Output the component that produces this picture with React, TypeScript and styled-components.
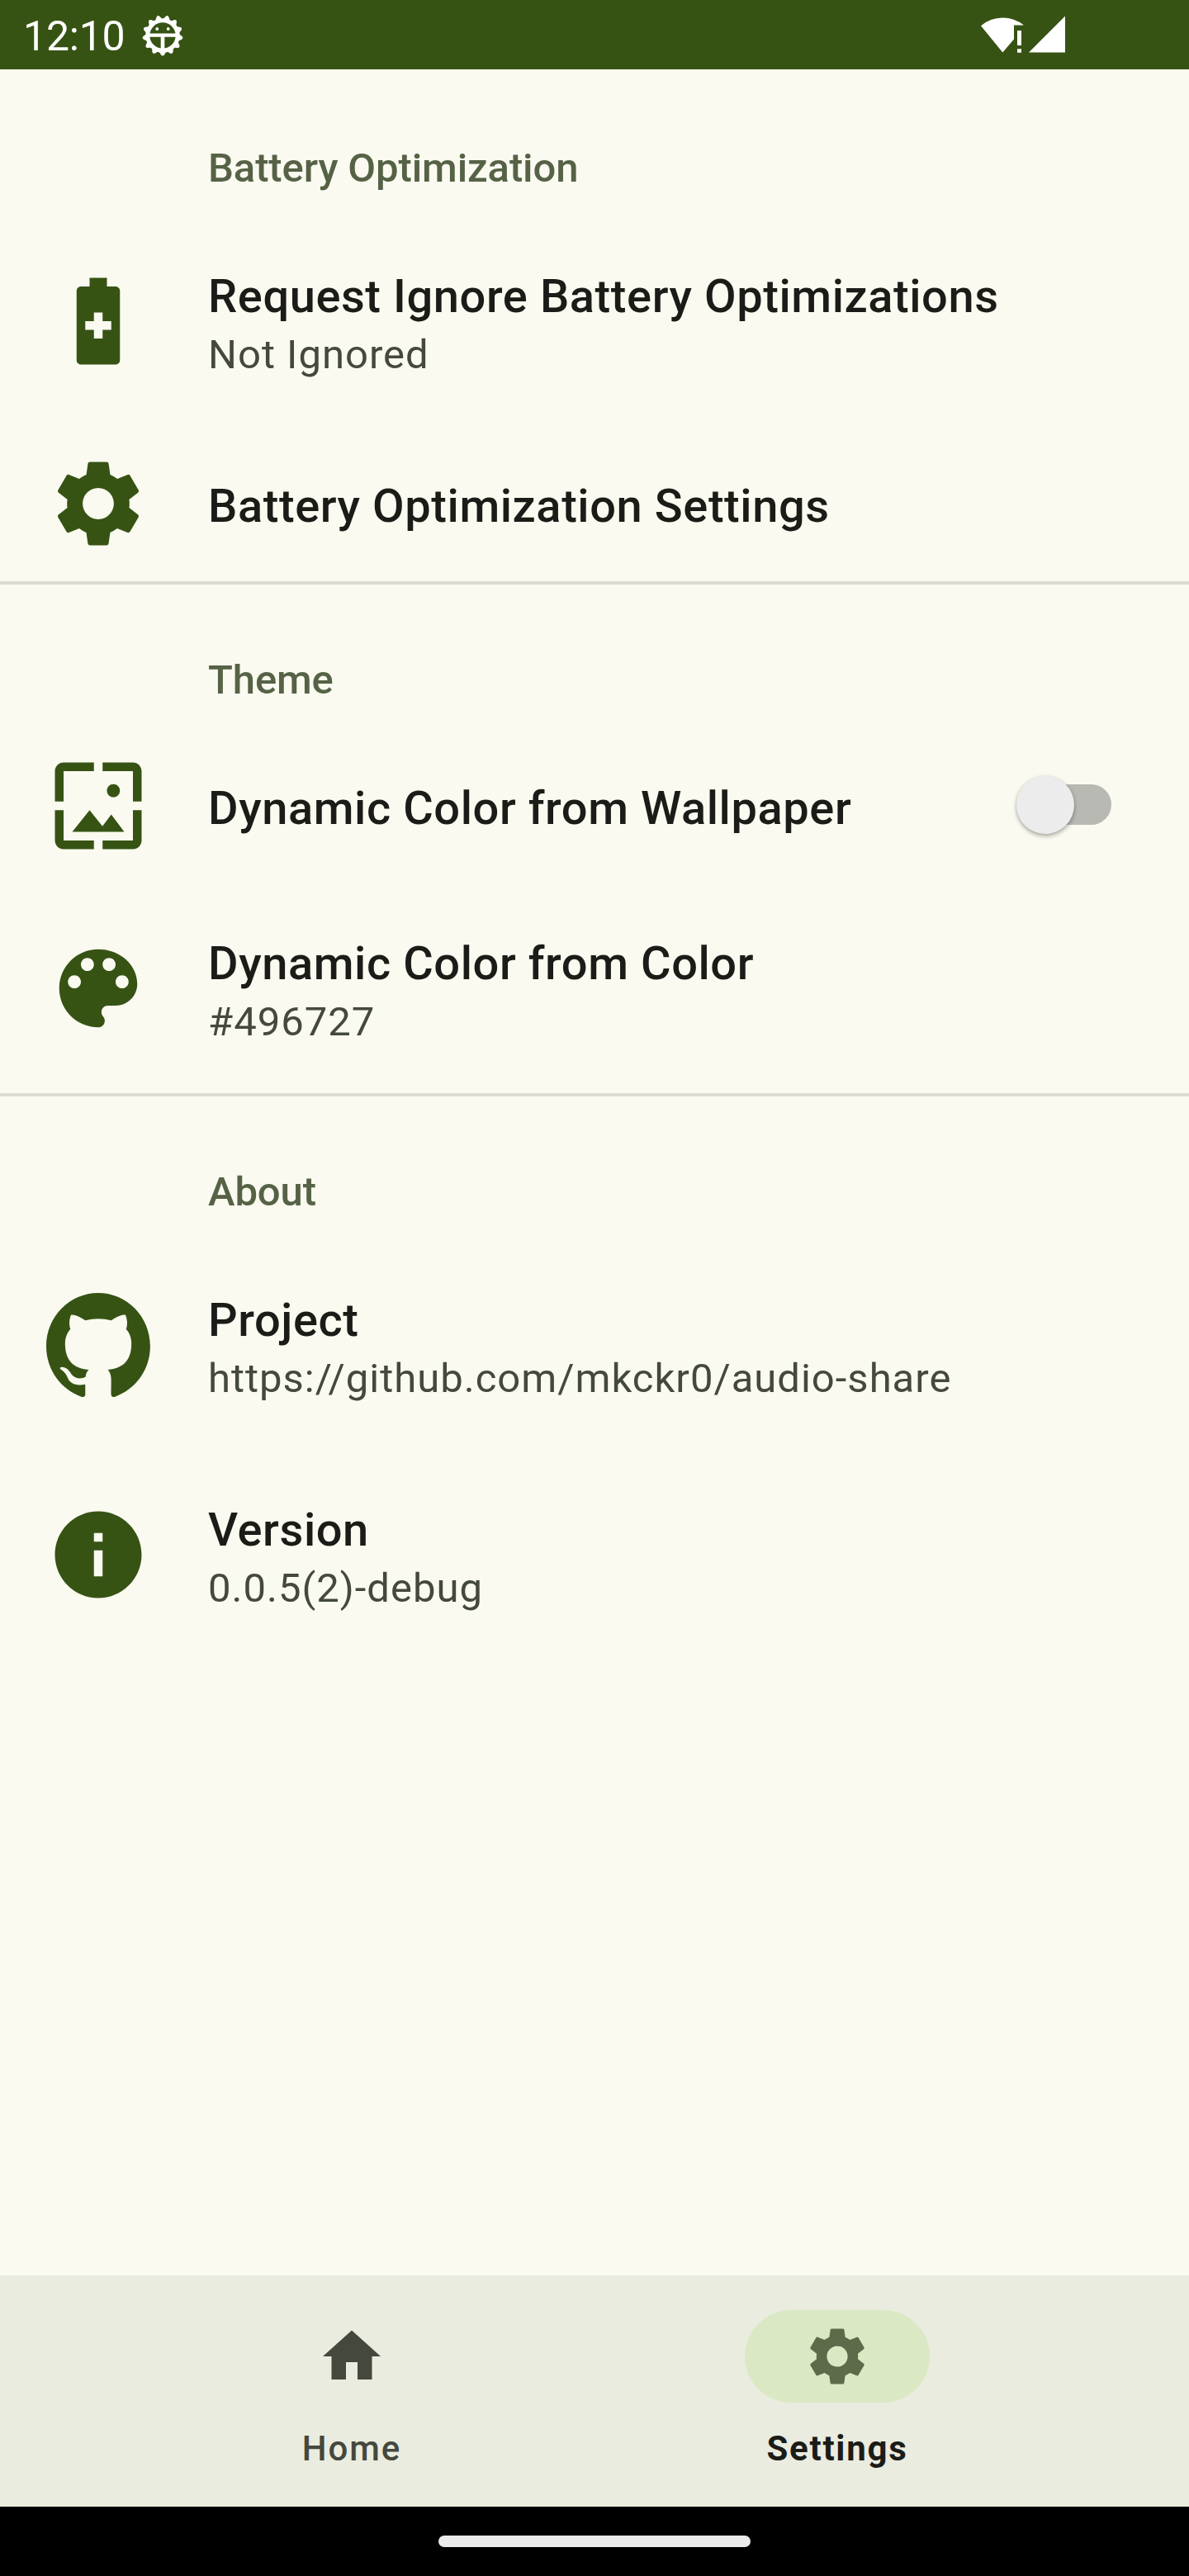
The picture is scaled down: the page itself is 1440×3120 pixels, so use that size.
import React from 'react';
import styled, { createGlobalStyle } from 'styled-components';

const color = {
  primary: '#365314',
  surface: '#fafaf0',
  navSurface: '#eaecdf',
  pill: '#dae9c4',
  pillIcon: '#5d6b4b',
  text: '#1b1c18',
  textVariant: '#44483d',
  category: '#566246',
  divider: '#dbdcd3',
};

const GlobalStyle = createGlobalStyle`
  * { box-sizing: border-box; }
  body { margin: 0; background: ${color.surface}; }
`;

const Screen = styled.div`
  display: flex;
  flex-direction: column;
  width: 1440px;
  height: 3120px;
  overflow: hidden;
  background: ${color.surface};
  color: ${color.text};
  font-family: Roboto, sans-serif;
`;

const StatusBar = styled.header`
  display: flex;
  align-items: center;
  flex: none;
  height: 84px;
  padding: 1px 150px 0 28px;
  background: ${color.primary};
  color: #fff;
`;

const Clock = styled.span`
  width: 144px;
  padding-top: 3px;
  font-size: 50px;
  line-height: 58px;
  letter-spacing: -0.2px;
  white-space: nowrap;
`;

const StatusIcon = styled.svg<{ $w: number; $h: number }>`
  display: block;
  flex: none;
  width: ${(p) => p.$w}px;
  height: ${(p) => p.$h}px;
  fill: currentColor;
`;

const Signals = styled.div`
  display: flex;
  gap: 5px;
  margin-left: auto;
  margin-top: -2px;
`;

const Content = styled.main`
  flex: 1;
`;

const Section = styled.section`
  & + & {
    background: linear-gradient(${color.divider}, ${color.divider}) top / 100% 4px no-repeat;
  }
`;

const Category = styled.h2`
  height: 178px;
  margin: 0;
  padding: 91px 0 0 252px;
  color: ${color.category};
  font-size: 49px;
  font-weight: 500;
  line-height: 57px;
  letter-spacing: -0.1px;
`;

const Row = styled.div<{ $tall?: boolean }>`
  display: flex;
  align-items: center;
  height: ${(p) => (p.$tall ? 254 : 188)}px;
  padding: 0 84px 0 56px;
`;

const RowIcon = styled.svg`
  display: block;
  flex: none;
  width: 126px;
  height: 126px;
  margin-right: 70px;
  fill: ${color.primary};
`;

const RowText = styled.div<{ $tall?: boolean }>`
  flex: 1;
  padding-top: ${(p) => (p.$tall ? 11 : 6)}px;
  white-space: nowrap;
`;

const Title = styled.div`
  font-size: 56px;
  font-weight: 500;
  line-height: 66px;
  letter-spacing: 0.58px;
`;

const Summary = styled.div`
  margin: 5px 0 1px;
  color: ${color.textVariant};
  font-size: 49px;
  line-height: 65px;
  letter-spacing: 1px;
`;

const Switch = styled.div`
  position: relative;
  width: 126px;
  height: 70px;
  margin-top: -2px;
  padding: 10px 10px 11px 14px;
`;

const Track = styled.div`
  height: 49px;
  border-radius: 25px;
  background: #b8b9b2;
`;

const Thumb = styled.div`
  position: absolute;
  top: 0;
  left: 1px;
  width: 70px;
  height: 70px;
  border-radius: 50%;
  background: #ececec;
  box-shadow: 0 3px 5px rgba(0, 0, 0, 0.28), 0 0 4px rgba(0, 0, 0, 0.1);
`;

const NavBar = styled.nav`
  display: flex;
  justify-content: center;
  flex: none;
  height: 280px;
  background: ${color.navSurface};
`;

const NavItem = styled.div<{ $active?: boolean }>`
  display: flex;
  flex-direction: column;
  align-items: center;
  width: 588px;
  padding-top: 42px;
  color: ${(p) => (p.$active ? color.text : color.textVariant)};
  font-size: 42px;
  font-weight: ${(p) => (p.$active ? 700 : 500)};
  line-height: 49px;
  letter-spacing: ${(p) => (p.$active ? 1.75 : 2)}px;
`;

const Pill = styled.div<{ $active?: boolean }>`
  display: flex;
  align-items: center;
  justify-content: center;
  width: 224px;
  height: 112px;
  margin-bottom: 31px;
  border-radius: 56px;
  background: ${(p) => (p.$active ? color.pill : 'transparent')};
  color: ${(p) => (p.$active ? color.pillIcon : color.textVariant)};
`;

const NavIcon = styled.svg`
  width: 84px;
  height: 84px;
  fill: currentColor;
`;

const GestureBar = styled.footer`
  display: flex;
  align-items: center;
  justify-content: center;
  flex: none;
  height: 84px;
  background: #000;
`;

const Handle = styled.div`
  width: 378px;
  height: 14px;
  border-radius: 7px;
  background: #ebebeb;
`;

const icons = {
  battery:
    'M16 4h-2V2h-4v2H8c-.55 0-1 .45-1 1v16c0 .55.45 1 1 1h8c.55 0 1-.45 1-1V5c0-.55-.45-1-1-1zm-1 10h-2v2h-2v-2H9v-2h2v-2h2v2h2v2z',
  gear: 'M19.14 12.94c.04-.3.06-.61.06-.94 0-.32-.02-.64-.07-.94l2.03-1.58c.18-.14.23-.41.12-.61l-1.92-3.32c-.12-.22-.37-.29-.59-.22l-2.39.96c-.5-.38-1.03-.7-1.62-.94l-.36-2.54c-.04-.24-.24-.41-.48-.41h-3.84c-.24 0-.43.17-.47.41l-.36 2.54c-.59.24-1.13.57-1.62.94l-2.39-.96c-.22-.08-.47 0-.59.22L2.74 8.87c-.12.21-.08.47.12.61l2.03 1.58c-.05.3-.09.63-.09.94s.02.64.07.94l-2.03 1.58c-.18.14-.23.41-.12.61l1.92 3.32c.12.22.37.29.59.22l2.39-.96c.5.38 1.03.7 1.62.94l.36 2.54c.05.24.24.41.48.41h3.84c.24 0 .44-.17.47-.41l.36-2.54c.59-.24 1.13-.56 1.62-.94l2.39.96c.22.08.47 0 .59-.22l1.92-3.32c.12-.22.07-.47-.12-.61l-2.01-1.58zM12 15.6c-1.98 0-3.6-1.62-3.6-3.6s1.62-3.6 3.6-3.6 3.6 1.62 3.6 3.6-1.62 3.6-3.6 3.6z',
  wallpaper:
    'M4 4h7V2H4c-1.1 0-2 .9-2 2v7h2V4zm6 9l-4 5h12l-3-4-2.03 2.71L10 13zm7-4.5c0-.83-.67-1.5-1.5-1.5S14 7.67 14 8.5s.67 1.5 1.5 1.5S17 9.33 17 8.5zM20 2h-7v2h7v7h2V4c0-1.1-.9-2-2-2zm0 18h-7v2h7c1.1 0 2-.9 2-2v-7h-2v7zM4 13H2v7c0 1.1.9 2 2 2h7v-2H4v-7z',
  palette:
    'M12 3c-4.97 0-9 4.03-9 9s4.03 9 9 9c.83 0 1.5-.67 1.5-1.5 0-.39-.15-.74-.39-1.01-.23-.26-.38-.61-.38-.99 0-.83.67-1.5 1.5-1.5H16c2.76 0 5-2.24 5-5 0-4.42-4.03-8-9-8zm-5.5 9c-.83 0-1.5-.67-1.5-1.5S5.67 9 6.5 9 8 9.67 8 10.5 7.33 12 6.5 12zm3-4C8.67 8 8 7.33 8 6.5S8.67 5 9.5 5s1.5.67 1.5 1.5S10.33 8 9.5 8zm5 0c-.83 0-1.5-.67-1.5-1.5S13.67 5 14.5 5s1.5.67 1.5 1.5S15.33 8 14.5 8zm3 4c-.83 0-1.5-.67-1.5-1.5S16.67 9 17.5 9s1.5.67 1.5 1.5-.67 1.5-1.5 1.5z',
  info: 'M12 2C6.48 2 2 6.48 2 12s4.48 10 10 10 10-4.48 10-10S17.52 2 12 2zm1 15h-2v-6h2v6zm0-8h-2V7h2v2z',
  home: 'M10 20v-6h4v6h5v-8h3L12 3 2 12h3v8z',
  github:
    'M48.854 0C21.839 0 0 22 0 49.217c0 21.756 13.993 40.172 33.405 46.69 2.427.49 3.316-1.059 3.316-2.362 0-1.141-.08-5.052-.08-9.127-13.59 2.934-16.42-5.867-16.42-5.867-2.184-5.704-5.42-7.17-5.42-7.17-4.448-3.015.324-3.015.324-3.015 4.934.326 7.523 5.052 7.523 5.052 4.367 7.496 11.404 5.378 14.235 4.074.404-3.178 1.699-5.378 3.074-6.6-10.839-1.141-22.243-5.378-22.243-24.283 0-5.378 1.94-9.778 5.014-13.2-.485-1.222-2.184-6.275.486-13.038 0 0 4.125-1.304 13.426 5.052a46.97 46.97 0 0 1 12.214-1.63c4.125 0 8.33.571 12.213 1.63 9.302-6.356 13.427-5.052 13.427-5.052 2.67 6.763.97 11.816.485 13.038 3.155 3.422 5.015 7.822 5.015 13.2 0 18.905-11.404 23.06-22.324 24.283 1.78 1.548 3.316 4.481 3.316 9.126 0 6.6-.08 11.897-.08 13.526 0 1.304.89 2.853 3.316 2.364 19.412-6.52 33.405-24.935 33.405-46.691C97.707 22 75.788 0 48.854 0z',
};

type IconName = keyof typeof icons;

type PreferenceProps = {
  icon: IconName;
  title: string;
  summary?: string;
  children?: React.ReactNode;
};

function Preference({ icon, title, summary, children }: PreferenceProps) {
  return (
    <Row $tall={!!summary}>
      <RowIcon viewBox={icon === 'github' ? '0 0 97.7 96' : '0 0 24 24'} preserveAspectRatio="none">
        <path d={icons[icon]} />
      </RowIcon>
      <RowText $tall={!!summary}>
        <Title>{title}</Title>
        {summary && <Summary>{summary}</Summary>}
      </RowText>
      {children}
    </Row>
  );
}

const TEETH = 13;

function DebugIcon() {
  return (
    <StatusIcon $w={50} $h={50} viewBox="-25 -25 50 50">
      <circle r="18.2" fill="none" stroke="currentColor" strokeWidth="5" />
      {Array.from({ length: TEETH }, (_, i) => (
        <path
          key={i}
          d="M-4.200 19.500L-2.100 23.200Q0 26 2.100 23.200L4.200 19.500z"
          transform={`rotate(${(i * 360) / TEETH})`}
        />
      ))}
      <path d="M-17 -2.6H17V1.7H2.3V17H-2.3V1.7H-17z" />
      <circle cx="-6.7" cy="-8" r="1.9" />
      <circle cx="6.7" cy="-8" r="1.9" />
    </StatusIcon>
  );
}

export default function App() {
  return (
    <>
      <GlobalStyle />
      <Screen>
        <StatusBar>
          <Clock>12:10</Clock>
          <DebugIcon />
          <Signals>
            <StatusIcon $w={53} $h={45} viewBox="0 0 53 45">
              <path d="M0 12.3A40.5 40.5 0 0 1 52 11.5H40V28.6L26.3 44.5z" />
              <path d="M44 18h5v18h-5zM44 40.300h5v4.400h-5z" />
            </StatusIcon>
            <StatusIcon $w={44} $h={45} viewBox="0 0 44 45">
              <path d="M44 .5V44.500H0z" />
            </StatusIcon>
          </Signals>
        </StatusBar>
        <Content>
          <Section>
            <Category>Battery Optimization</Category>
            <Preference icon="battery" title="Request Ignore Battery Optimizations" summary="Not Ignored" />
            <Preference icon="gear" title="Battery Optimization Settings" />
          </Section>
          <Section>
            <Category>Theme</Category>
            <Preference icon="wallpaper" title="Dynamic Color from Wallpaper">
              <Switch>
                <Track />
                <Thumb />
              </Switch>
            </Preference>
            <Preference icon="palette" title="Dynamic Color from Color" summary="#496727" />
          </Section>
          <Section>
            <Category>About</Category>
            <Preference icon="github" title="Project" summary="https://github.com/mkckr0/audio-share" />
            <Preference icon="info" title="Version" summary="0.0.5(2)-debug" />
          </Section>
        </Content>
        <NavBar>
          <NavItem>
            <Pill>
              <NavIcon viewBox="0 0 24 24">
                <path d={icons.home} />
              </NavIcon>
            </Pill>
            Home
          </NavItem>
          <NavItem $active>
            <Pill $active>
              <NavIcon viewBox="0 0 24 24">
                <path d={icons.gear} />
              </NavIcon>
            </Pill>
            Settings
          </NavItem>
        </NavBar>
        <GestureBar>
          <Handle />
        </GestureBar>
      </Screen>
    </>
  );
}
